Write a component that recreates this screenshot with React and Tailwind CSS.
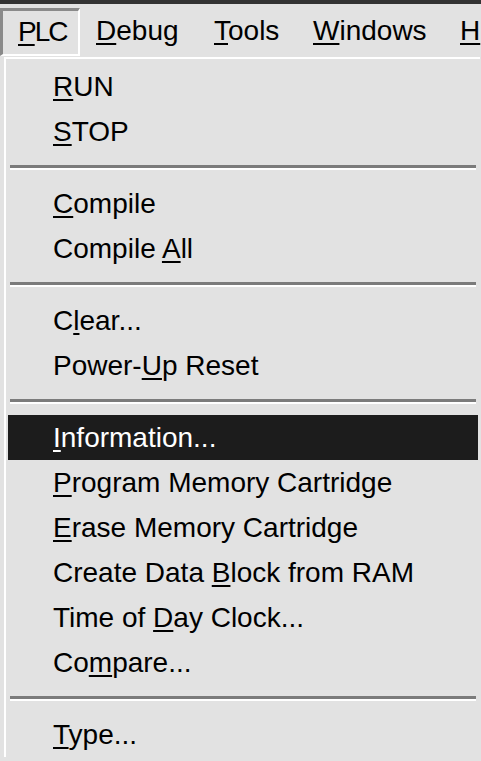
import React from "react";

const font = { fontFamily: '"Liberation Sans", Arial, sans-serif' };

// label with the mnemonic letter underlined, like a Win32 menu
function Label({ text, u }) {
  return (
    <span>
      {text.slice(0, u)}
      <span className="underline decoration-2 underline-offset-[3px]">{text[u]}</span>
      {text.slice(u + 1)}
    </span>
  );
}

const menuBar = [
  { text: "Debug", u: 0, w: "w-[118px]" },
  { text: "Tools", u: 0, w: "w-[99px]" },
  { text: "Windows", u: 0, w: "w-[147px]" },
  { text: "H", u: 0, w: "w-[37px]" },
];

const groups = [
  [
    { text: "RUN", u: 0 },
    { text: "STOP", u: 0 },
  ],
  [
    { text: "Compile", u: 0 },
    { text: "Compile All", u: 8 },
  ],
  [
    { text: "Clear...", u: 1 },
    { text: "Power-Up Reset", u: 6 },
  ],
  [
    { text: "Information...", u: 0, active: true },
    { text: "Program Memory Cartridge", u: 0 },
    { text: "Erase Memory Cartridge", u: 0 },
    { text: "Create Data Block from RAM", u: 12 },
    { text: "Time of Day Clock...", u: 8 },
    { text: "Compare...", u: 2 },
  ],
  [{ text: "Type...", u: 0 }],
];

function Separator() {
  return (
    <div className="h-[27px] pt-[11px] px-[2px]">
      <div className="h-[3px] bg-[#7b7b7b]" />
      <div className="h-[2px] bg-white" />
    </div>
  );
}

function Item({ text, u, active }) {
  return (
    <div
      className={
        "h-[45px] leading-[45px] pl-[45px] whitespace-nowrap text-[28px] " +
        (active ? "bg-[#1c1c1c] text-white" : "text-black")
      }
    >
      <Label text={text} u={u} />
    </div>
  );
}

export default function App() {
  return (
    <div className="w-[481px] h-[761px] overflow-hidden bg-[#e2e2e2] text-black" style={font}>
      <div className="h-[4px] bg-[#333333]" />

      {/* menu bar */}
      <div className="h-[53px] flex items-start text-[28px] whitespace-nowrap">
        <div className="shrink-0 mt-[4px] w-[80px] h-[48px] leading-[42px] pl-[15px] tracking-[-2px] border-t-[3px] border-l-[3px] border-[#8a8a8a] border-r-2 border-r-white border-b-2 border-b-white">
          <Label text="PLC" u={0} />
        </div>
        {menuBar.map((m) => (
          <div key={m.text} className={"shrink-0 mt-[4px] h-[48px] leading-[46px] pl-4 " + m.w}>
            <Label text={m.text} u={m.u} />
          </div>
        ))}
      </div>

      {/* dropdown */}
      <div className="pl-[4px] pr-[1px]">
        <div className="border-l-2 border-t-2 border-white px-[2px] pt-[5px]">
          {groups.map((g, gi) => (
            <div key={gi}>
              {gi > 0 && <Separator />}
              {g.map((it) => (
                <Item key={it.text} {...it} />
              ))}
            </div>
          ))}
        </div>
      </div>
    </div>
  );
}
